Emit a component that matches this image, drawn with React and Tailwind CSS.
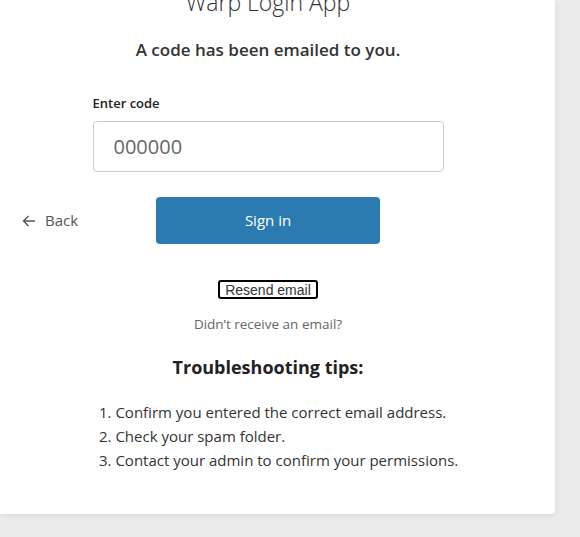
import React, { useState } from "react";

export default function App() {
  const [code, setCode] = useState("");

  return (
    <div className="min-h-[537px] bg-[#ececec] overflow-hidden" style={{ fontFamily: '"Open Sans", "Noto Sans", sans-serif' }}>
      <div className="w-[555px] bg-white rounded-br-[4px] shadow-[0_2px_6px_rgba(0,0,0,0.08)] pb-[42px]">
        <div className="w-[536px] flex flex-col items-center">
          {/* Title, scrolled partly out of view */}
          <h1 className="mt-[-14px] text-[23px] leading-[32px] font-light text-[#333]">Warp Login App</h1>

          <p className="mt-[20px] text-[17px] leading-[24px] font-semibold text-[#333]">A code has been emailed to you.</p>

          <div className="mt-[32px] w-[351px]">
            <label className="block text-[13px] leading-[18px] font-semibold text-[#222]">Enter code</label>
            <input
              value={code}
              onChange={(e) => setCode(e.target.value)}
              placeholder="000000"
              className="mt-[9px] w-full h-[51px] px-[20px] rounded-[4px] border border-[#ccc] text-[20px] text-[#333] placeholder:text-[#666] outline-none"
            />
          </div>

          {/* Back + Sign in */}
          <div className="mt-[25px] w-full grid grid-cols-[1fr_224px_1fr] items-center">
            <button className="flex items-center gap-[9px] pl-[22px] text-[15px] text-[#555]">
              <svg className="h-[14px] w-[14px]" viewBox="0 0 14 14" fill="none" stroke="#555" strokeWidth="1.4">
                <path d="M13 7H1.5M6.5 2L1.5 7l5 5" />
              </svg>
              Back
            </button>
            <button className="h-[47px] rounded-[4px] bg-[#2c7bb0] text-white text-[15px]">Sign in</button>
            <div />
          </div>

          <button
            className="mt-[36px] px-[5px] h-[19px] border-2 border-black rounded-[3px] text-[14px] leading-[14px] text-[#333]"
            style={{ fontFamily: '"Liberation Sans", Arial, sans-serif' }}
          >
            Resend email
          </button>

          <p className="mt-[16px] text-[13.5px] leading-[18px] text-[#666]">Didn’t receive an email?</p>

          <h2 className="mt-[22px] text-[18px] leading-[24px] font-bold text-[#222]">Troubleshooting tips:</h2>

          <ol className="mt-[21px] self-start ml-[99px] list-decimal list-inside text-[15px] leading-[24px] text-[#333]">
            <li>Confirm you entered the correct email address.</li>
            <li>Check your spam folder.</li>
            <li>Contact your admin to confirm your permissions.</li>
          </ol>
        </div>
      </div>
    </div>
  );
}
